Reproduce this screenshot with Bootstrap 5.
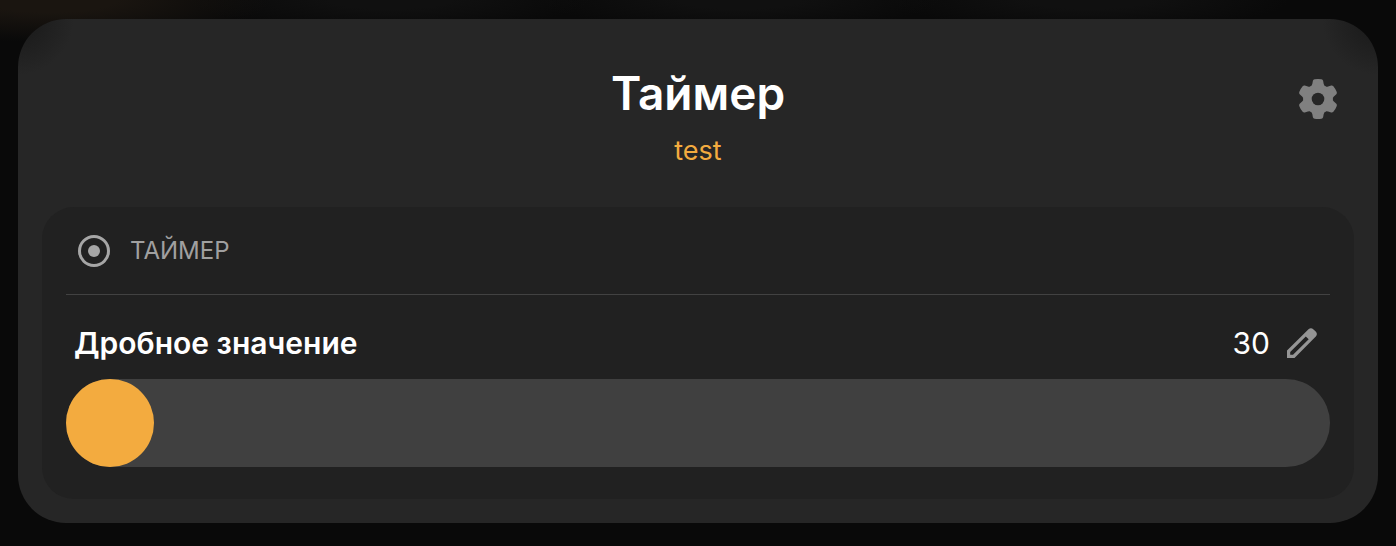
<!DOCTYPE html>
<html lang="ru" data-bs-theme="dark">
<head>
<meta charset="utf-8">
<meta name="viewport" content="width=device-width, initial-scale=1">
<title>Таймер</title>
<link href="https://cdn.jsdelivr.net/npm/bootstrap@5.3.0/dist/css/bootstrap.min.css" rel="stylesheet">
<style>
  :root { --accent: #f3ab3f; }
  body {
    font-family: Inter, "Liberation Sans", sans-serif;
    color: #fff;
    background:
      radial-gradient(ellipse 220px 42px at 50px 0, #1a1510 30%, #1a151000),
      radial-gradient(ellipse 200px 30px at 390px 0, #101010 30%, #10101000),
      radial-gradient(ellipse 200px 30px at 740px 0, #101010 30%, #10101000),
      radial-gradient(ellipse 200px 30px at 1090px 0, #101010 30%, #10101000),
      #090909;
  }
  .page { padding: 19px 18px 23px; }
  .sheet {
    background:
      radial-gradient(circle at 0 0, #1c1c1c 16px, #1c1c1c00 56px),
      radial-gradient(circle at 100% 0, #1c1c1c 16px, #1c1c1c00 56px),
      #262626;
    border-radius: 48px;
    padding: 24px;
  }
  .sheet-head {
    display: grid;
    grid-template-columns: 40px 1fr 40px;
    padding: 20px 16px 0;
    height: 164px;
  }
  .sheet-title { font-size: 46px; line-height: 60px; font-weight: 600; color: #fff; }
  .sheet-sub { font-size: 27px; line-height: 36px; margin-top: 10px; color: var(--accent); }
  .gear { color: #808080; margin-top: 16px; width: 40px; height: 40px; }
  .panel { background: #212121; border-radius: 32px; padding: 0 24px 32px; }
  .panel-head {
    height: 88px;
    gap: 20px;
    padding: 0 12px;
    border-bottom: 1px solid #424242;
    color: #a6a6a6;
  }
  .panel-name { font-size: 24px; line-height: 32px; color: #a0a0a0; }
  .field { height: 84px; padding: 12px 12px 0 8px; font-size: 30px; line-height: 40px; }
  .pencil { color: #959595; margin-left: 16px; }
  .pill {
    appearance: none;
    height: 88px;
    background: #404040;
    border-radius: 44px;
    margin: 0;
  }
  .pill::-webkit-slider-thumb {
    appearance: none;
    width: 88px;
    height: 88px;
    border-radius: 50%;
    background: var(--accent);
  }
  .pill::-moz-range-thumb { width: 88px; height: 88px; border: 0; border-radius: 50%; background: var(--accent); }
</style>
</head>
<body>
<main class="page container-fluid">
  <section class="sheet">
    <header class="sheet-head">
      <span></span>
      <div class="text-center">
        <h1 class="sheet-title m-0">Таймер</h1>
        <p class="sheet-sub mb-0">test</p>
      </div>
      <button type="button" class="gear btn p-0 border-0 d-flex" aria-label="Настройки">
        <svg width="40" height="40" viewBox="-20 -20 40 40" fill="currentColor" aria-hidden="true">
          <defs>
            <path id="tooth" d="M-8.5 -11.8Q-6.2 -12.6 -5.7 -15L-5.1 -18.2Q-4.8 -19.4 -3.4 -19.7Q0 -20.3 3.4 -19.7Q4.8 -19.4 5.1 -18.2L5.7 -15Q6.2 -12.6 8.5 -11.8V0H-8.5Z"/>
            <mask id="hub"><rect x="-20" y="-20" width="40" height="40" fill="#fff"/><circle r="6.3" fill="#000"/></mask>
          </defs>
          <g mask="url(#hub)">
            <circle r="14.6"/>
            <use href="#tooth"/>
            <use href="#tooth" transform="rotate(60)"/>
            <use href="#tooth" transform="rotate(120)"/>
            <use href="#tooth" transform="rotate(180)"/>
            <use href="#tooth" transform="rotate(240)"/>
            <use href="#tooth" transform="rotate(300)"/>
          </g>
        </svg>
      </button>
    </header>
    <div class="panel">
      <div class="panel-head d-flex align-items-center">
        <svg width="32" height="32" viewBox="0 0 32 32" aria-hidden="true">
          <circle cx="16" cy="16" r="14.5" fill="none" stroke="currentColor" stroke-width="3"/>
          <circle cx="16" cy="16" r="6" fill="currentColor"/>
        </svg>
        <h2 class="panel-name fw-normal m-0">ТАЙМЕР</h2>
      </div>
      <div class="field d-flex align-items-center pb-0">
        <label for="value" class="fw-semibold me-auto">Дробное значение</label>
        <output for="value">30</output>
        <button type="button" class="pencil btn p-0 border-0 d-flex" aria-label="Изменить">
          <svg width="32" height="32" viewBox="-1 -1 32 32" fill="currentColor" fill-rule="evenodd" aria-hidden="true">
            <path d="M0 30V22.5L21.5 1.2Q24 -1 26.5 1.4L28.7 3.6Q31 6 28.8 8.5L7.5 30ZM3.2 26.8H6L21.7 11.3L18.8 8.4L3.2 24Z"/>
          </svg>
        </button>
      </div>
      <input id="value" class="pill d-block w-100" type="range" min="30" max="3600" value="30">
    </div>
  </section>
</main>
<script src="https://cdn.jsdelivr.net/npm/bootstrap@5.3.0/dist/js/bootstrap.bundle.min.js"></script>
</body>
</html>
